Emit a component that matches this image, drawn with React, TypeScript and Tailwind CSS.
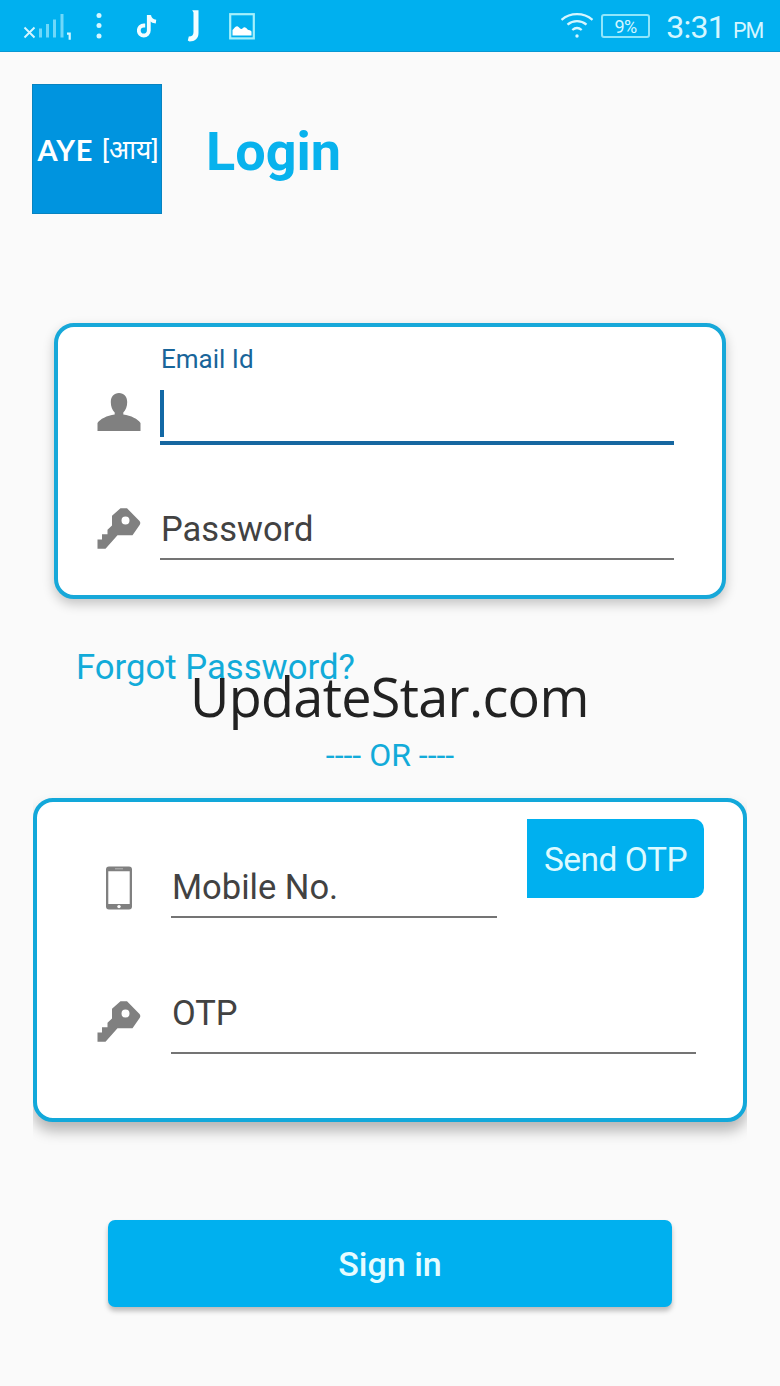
import type { ReactNode } from 'react';

function SignalIcon() {
  return (
    <svg width="50" height="30" viewBox="0 0 50 30" className="mt-[5px] ml-[23px]" fill="none">
      <path d="M1.500 14.500l10 10M11.500 14.500l-10 10" stroke="#d5f6ff" strokeWidth="1.900" />
      <path d="M17.500 15.500v9M24.500 11v13.500M31.500 6.500v18M39 1v23.500" stroke="#6fd8fa" strokeWidth="3" />
      <path d="M44 20.700h2.700v6" stroke="#d5f6ff" strokeWidth="2.200" />
    </svg>
  );
}

function DotsIcon() {
  return (
    <svg width="6" height="28" viewBox="0 0 6 28" className="ml-[23px]" fill="#d5f6ff">
      <circle cx="3" cy="3.500" r="2.500" />
      <circle cx="3" cy="13.500" r="2.500" />
      <circle cx="3" cy="24" r="2.500" />
    </svg>
  );
}

function TiktokIcon() {
  return (
    <svg width="20" height="24" viewBox="0 0 20 24" className="ml-[35px]" fill="none" stroke="#f2fdff" strokeWidth="3.800">
      <path d="M11.800 1v15.500a5 5 0 1 1-5-5h1.400" />
      <path d="M12.200 1.500c.4 3.500 2.800 5.600 6.800 6.100" />
    </svg>
  );
}

function JIcon() {
  return (
    <svg width="13" height="33" viewBox="0 0 13 33" className="ml-[30px]" fill="#f2fdff">
      <path d="M5.200 1.200H11.500v22.800c0 5.500-3.500 8.500-9 8.500L.8 31.500l1-4c3.200 0 4.700-1.500 4.700-4.500V3.500z" />
    </svg>
  );
}

function PictureIcon() {
  return (
    <svg width="26" height="27" viewBox="0 0 26 27" className="mt-px ml-[29px]">
      <rect x="1.200" y="1.200" width="23.600" height="24.200" fill="none" stroke="#a5f0fb" strokeWidth="2.200" />
      <path d="M3.500 22.500v-5.500c1.500-1 2.500-4 4.700-3.800 1.500 0 2.300 2.600 4 2.800 1.700.1 1.800-2 4-1.600 1.800.3 1.800 2.200 3.300 2.600 2 .3 3 .8 3 2v3.500z" fill="#fff" />
    </svg>
  );
}

function WifiIcon() {
  return (
    <svg width="34" height="27" viewBox="0 0 34 27" fill="none" stroke="#d5f6ff" strokeWidth="2.300">
      <path d="M1.500 7.800C10.500.2 23.500.2 32.500 7.800" />
      <path d="M7.500 12.600c5.600-4.600 13.400-4.600 19 0" />
      <path d="M12.300 18c2.900-2.500 6.500-2.500 9.400 0" />
      <circle cx="17" cy="24" r="1.700" fill="#d5f6ff" stroke="none" />
    </svg>
  );
}

function UserIcon() {
  return (
    <svg width="44" height="40" viewBox="0 0 44 40" fill="#808080">
      <path d="M22 1c5 0 8.200 3.500 8.200 9 0 4.500-1.400 8-3.900 10.500v2C34 23.500 41 27 43.500 31v8H.5v-8C3 27 10 23.500 17.700 22.500v-2C15.200 18 13.800 14.500 13.800 10c0-5.500 3.200-9 8.200-9z" />
    </svg>
  );
}

function KeyIcon() {
  return (
    <svg width="44" height="43" viewBox="0 0 44 43" fill="#808080">
      <path
        fillRule="evenodd"
        d="M23.500 1.200h6.500L42.500 14c1 1.200 1 2.500.3 3.800L35.500 28.300H20.500L8.500 41.700H.5V32.500H5v-5.200h5.500v-4.500L15 18.500V8.800zM28.500 9.500a4 4 0 1 0 0 8 4 4 0 0 0 0-8z"
      />
    </svg>
  );
}

function PhoneIcon() {
  return (
    <svg width="28" height="44" viewBox="0 0 28 44">
      <path
        fill="#808080"
        fillRule="evenodd"
        d="M4 .5h20a3 3 0 0 1 3 3v37a3 3 0 0 1-3 3H4a3 3 0 0 1-3-3v-37a3 3 0 0 1 3-3zM3.300 5.200V38h21.400V5.200z"
      />
      <path d="M10 2.800h8" stroke="#b5b5b5" strokeWidth="1" />
      <circle cx="14" cy="40.600" r="1.700" fill="#fff" />
    </svg>
  );
}

function StatusBar() {
  return (
    <header className="flex h-[52px] items-center border-b border-[#0898d3] bg-[#00b0ef] text-[#d5f6ff]">
      <SignalIcon />
      <DotsIcon />
      <TiktokIcon />
      <JIcon />
      <PictureIcon />
      <div className="ml-auto flex items-center pr-[17px]">
        <WifiIcon />
        <div className="mt-px ml-[7px] flex h-[24px] w-[49px] items-center justify-center rounded-[3px] border-2 border-[#8fe6fb] pt-px text-[18px] leading-none tracking-[-0.5px]">
          9%
        </div>
        <div className="mt-[2px] ml-[16px] flex items-baseline leading-none">
          <span className="text-[32px] tracking-[-0.7px]">3:31</span>
          <span className="ml-[8px] text-[21.500px] tracking-[-1.2px]">PM</span>
        </div>
      </div>
    </header>
  );
}

type FieldProps = { label: string; className: string };

function Field({ label, className }: FieldProps) {
  return (
    <label className={`block border-b-2 border-[#747474] pl-px text-[34.500px] leading-[40px] text-[#424242] ${className}`}>
      {label}
    </label>
  );
}

function IconCell({ children, className }: { children: ReactNode; className: string }) {
  return <div className={`flex w-[44px] shrink-0 justify-center ${className}`}>{children}</div>;
}

export default function App() {
  return (
    <div className="relative h-[1386px] w-[780px] overflow-hidden bg-[#fafafa] font-['Roboto','Noto_Sans',sans-serif]">
      <StatusBar />

      <div className="mt-8 ml-8 flex h-[130px] items-center">
        <div className="flex size-[130px] items-center justify-center border border-[#0783c0] bg-[#0094df] pt-px pl-[2px] whitespace-nowrap text-white">
          <span className="font-['Lato',sans-serif] text-[29px] font-bold tracking-[0.7px]">AYE</span>
          <span className="ml-[9px] text-[26.500px]">[आय]</span>
        </div>
        <h1 className="ml-[44px] pt-[6px] text-[54px] leading-none font-bold text-[#08b2ed]">Login</h1>
      </div>

      <form>
        <section className="mx-[54px] mt-[109px] h-[276px] rounded-[20px] border-4 border-[#17a8d9] bg-white pt-[17px] pl-[39px] shadow-[0_5px_12px_rgba(0,0,0,0.22)]">
          <div className="flex">
            <IconCell className="mt-[48px]"><UserIcon /></IconCell>
            <div className="ml-[19px] h-[101px] w-[514px] border-b-4 border-[#1667a0]">
              <label className="block pl-px text-[26px] leading-[30px] text-[#19659a]">Email Id</label>
              <div className="mt-[16px] h-[47px] w-[4px] bg-[#1268a5]" />
            </div>
          </div>
          <div className="mt-[62px] flex">
            <IconCell className=""><KeyIcon /></IconCell>
            <Field label="Password" className="ml-[19px] h-[53px] w-[514px] pt-[2px]" />
          </div>
        </section>

        <a className="mt-[48px] ml-[76px] block text-[34.700px] leading-[40px] text-[#12abd9]">Forgot Password?</a>
        <p className="mt-[48px] text-center text-[32px] leading-[40px] text-[#12abd9]">---- OR ----</p>

        {/* the card shadow is cut off at the card's own left and right edges */}
        <div className="mt-[15px] px-[33px] pt-2 pb-6 [clip-path:inset(0_33px)]">
          <section className="h-[324px] rounded-[20px] border-4 border-[#12a8da] bg-white pt-[17px] pl-[60px] shadow-[0_9px_14px_rgba(0,0,0,0.28)]">
            <div className="flex">
              <IconCell className="mt-[47px]"><PhoneIcon /></IconCell>
              <Field label="Mobile No." className="mt-[48px] ml-[30px] h-[51px] w-[326px]" />
              <button
                type="button"
                className="ml-[30px] h-[79px] w-[177px] rounded-r-[10px] bg-[#00b0ef] pt-[4px] text-[33.500px] tracking-[-0.5px] whitespace-nowrap text-[#dcfaff]"
              >
                Send OTP
              </button>
            </div>
            <div className="mt-[75px] flex">
              <IconCell className="mt-[7px]"><KeyIcon /></IconCell>
              <Field label="OTP" className="ml-[30px] h-[61px] w-[525px]" />
            </div>
          </section>
        </div>

        <button
          type="submit"
          className="mx-auto mt-[74px] block h-[87px] w-[564px] rounded-[7px] bg-[#00b0ef] pt-px text-[34px] font-medium text-[#e6fcff] shadow-[0_4px_5px_rgba(0,0,0,0.25)]"
        >
          Sign in
        </button>
      </form>

      <div className="absolute top-[658px] left-[190px] font-['Open_Sans','Noto_Sans',sans-serif] text-[54px] leading-[76px] tracking-[-0.7px] whitespace-nowrap text-[#222]">
        UpdateStar.com
      </div>
    </div>
  );
}
